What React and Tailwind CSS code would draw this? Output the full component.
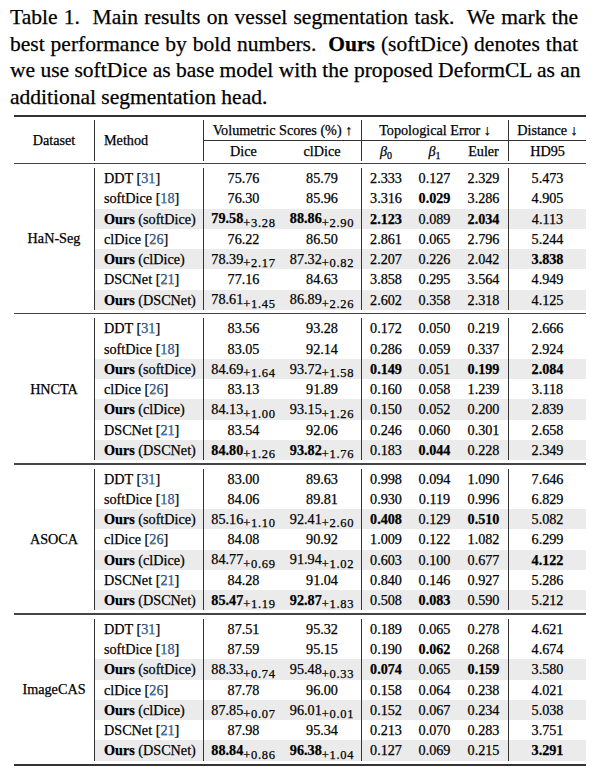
import React from "react";

const sections = [
  {
    name: "HaN-Seg",
    rows: [
      ["DDT", "31", ["75.76", "85.79", "2.333", "0.127", "2.329", "5.473"]],
      ["softDice", "18", ["76.30", "85.96", "3.316", "*0.029", "3.286", "4.905"]],
      ["(softDice)", null, ["*79.58|+3.28", "*88.86|+2.90", "*2.123", "0.089", "*2.034", "4.113"]],
      ["clDice", "26", ["76.22", "86.50", "2.861", "0.065", "2.796", "5.244"]],
      ["(clDice)", null, ["78.39|+2.17", "87.32|+0.82", "2.207", "0.226", "2.042", "*3.838"]],
      ["DSCNet", "21", ["77.16", "84.63", "3.858", "0.295", "3.564", "4.949"]],
      ["(DSCNet)", null, ["78.61|+1.45", "86.89|+2.26", "2.602", "0.358", "2.318", "4.125"]],
    ],
  },
  {
    name: "HNCTA",
    rows: [
      ["DDT", "31", ["83.56", "93.28", "0.172", "0.050", "0.219", "2.666"]],
      ["softDice", "18", ["83.05", "92.14", "0.286", "0.059", "0.337", "2.924"]],
      ["(softDice)", null, ["84.69|+1.64", "93.72|+1.58", "*0.149", "0.051", "*0.199", "*2.084"]],
      ["clDice", "26", ["83.13", "91.89", "0.160", "0.058", "1.239", "3.118"]],
      ["(clDice)", null, ["84.13|+1.00", "93.15|+1.26", "0.150", "0.052", "0.200", "2.839"]],
      ["DSCNet", "21", ["83.54", "92.06", "0.246", "0.060", "0.301", "2.658"]],
      ["(DSCNet)", null, ["*84.80|+1.26", "*93.82|+1.76", "0.183", "*0.044", "0.228", "2.349"]],
    ],
  },
  {
    name: "ASOCA",
    rows: [
      ["DDT", "31", ["83.00", "89.63", "0.998", "0.094", "1.090", "7.646"]],
      ["softDice", "18", ["84.06", "89.81", "0.930", "0.119", "0.996", "6.829"]],
      ["(softDice)", null, ["85.16|+1.10", "92.41|+2.60", "*0.408", "0.129", "*0.510", "5.082"]],
      ["clDice", "26", ["84.08", "90.92", "1.009", "0.122", "1.082", "6.299"]],
      ["(clDice)", null, ["84.77|+0.69", "91.94|+1.02", "0.603", "0.100", "0.677", "*4.122"]],
      ["DSCNet", "21", ["84.28", "91.04", "0.840", "0.146", "0.927", "5.286"]],
      ["(DSCNet)", null, ["*85.47|+1.19", "*92.87|+1.83", "0.508", "*0.083", "0.590", "5.212"]],
    ],
  },
  {
    name: "ImageCAS",
    rows: [
      ["DDT", "31", ["87.51", "95.32", "0.189", "0.065", "0.278", "4.621"]],
      ["softDice", "18", ["87.59", "95.15", "0.190", "*0.062", "0.268", "4.674"]],
      ["(softDice)", null, ["88.33|+0.74", "95.48|+0.33", "*0.074", "0.065", "*0.159", "3.580"]],
      ["clDice", "26", ["87.78", "96.00", "0.158", "0.064", "0.238", "4.021"]],
      ["(clDice)", null, ["87.85|+0.07", "96.01|+0.01", "0.152", "0.067", "0.234", "5.038"]],
      ["DSCNet", "21", ["87.98", "95.34", "0.213", "0.070", "0.283", "3.751"]],
      ["(DSCNet)", null, ["*88.84|+0.86", "*96.38|+1.04", "0.127", "0.069", "0.215", "*3.291"]],
    ],
  },
];

const borderCols = [0, 1, 3, 6];

function Value({ v }) {
  const bold = v.startsWith("*");
  const s = bold ? v.slice(1) : v;
  const [main, sub] = s.split("|");
  return (
    <span className="whitespace-nowrap">
      <span className={bold ? "font-bold" : ""}>{main}</span>
      {sub && (
        <span className="relative top-[3.5px] text-[12.5px] leading-none tracking-[0.7px]">{sub}</span>
      )}
    </span>
  );
}

function Row({ method, cite, vals }) {
  const ours = cite === null;
  return (
    <div
      className={
        "grid grid-cols-[109px_80px_78px_49px_49px_49px_78px] h-[20.25px] " +
        (ours ? "bg-[#ebebeb]" : "")
      }
    >
      <div className="flex items-center pl-[9px] border-l border-[#333] whitespace-nowrap">
        {ours ? (
          <span>
            <span className="font-bold">Ours</span> {method}
          </span>
        ) : (
          <span>
            {method} [<span className="text-[#3a7bc8]">{cite}</span>]
          </span>
        )}
      </div>
      {vals.map((v, i) => (
        <div
          key={i}
          className={
            "flex items-center justify-center " +
            (borderCols.includes(i + 1) ? "border-l border-[#333]" : "")
          }
        >
          <Value v={v} />
        </div>
      ))}
    </div>
  );
}

function Section({ sec }) {
  return (
    <div className="flex">
      <div className="w-[80px] flex items-center justify-center">{sec.name}</div>
      <div className="flex flex-col pt-[4px] pb-[3px]">
        {sec.rows.map((r, i) => (
          <Row key={i} method={r[0]} cite={r[1]} vals={r[2]} />
        ))}
      </div>
    </div>
  );
}

const lineCls = "whitespace-nowrap text-justify [text-align-last:justify]";

export default function App() {
  return (
    <div className="w-[600px] h-[778px] bg-white text-black font-['Liberation_Serif',serif] overflow-hidden [-webkit-text-stroke:0.25px_#000]">
      <div className="pl-[10px] w-[578px] pt-[4px] text-[21.5px] leading-[26.5px]">
        <div className={lineCls}>Table 1.&nbsp; Main results on vessel segmentation task.&nbsp; We mark the</div>
        <div className={lineCls}>
          best performance by bold numbers.&nbsp; <span className="font-bold">Ours</span> (softDice) denotes that
        </div>
        <div className={lineCls}>we use softDice as base model with the proposed DeformCL as an</div>
        <div>additional segmentation head.</div>
      </div>

      <div className="ml-[14px] mt-[5px] w-[572px] text-[14.2px] leading-none">
        <div className="h-[2px] bg-[#333]" />
        <div className="pt-[3px] pb-[1.5px]">
          <div className="grid grid-cols-[80px_109px_80px_78px_49px_49px_49px_78px] grid-rows-[21px_20px]">
            <div className="row-span-2 flex items-center justify-center">Dataset</div>
            <div className="row-span-2 flex items-center pl-[9px] border-l border-[#333]">Method</div>
            <div className="col-span-2 flex items-center justify-center border-l border-b border-[#333] whitespace-nowrap">
              Volumetric Scores (%) ↑
            </div>
            <div className="col-span-3 flex items-center justify-center border-l border-b border-[#333] whitespace-nowrap">
              Topological Error ↓
            </div>
            <div className="flex items-center justify-center border-l border-b border-[#333] whitespace-nowrap">
              Distance ↓
            </div>
            <div className="flex items-center justify-center border-l border-[#333]">Dice</div>
            <div className="flex items-center justify-center">clDice</div>
            <div className="flex items-center justify-center border-l border-[#333]">
              <span>
                <i>β</i>
                <span className="relative top-[3px] text-[10px]">0</span>
              </span>
            </div>
            <div className="flex items-center justify-center">
              <span>
                <i>β</i>
                <span className="relative top-[3px] text-[10px]">1</span>
              </span>
            </div>
            <div className="flex items-center justify-center">Euler</div>
            <div className="flex items-center justify-center border-l border-[#333]">HD95</div>
          </div>
        </div>
        {sections.map((sec) => (
          <React.Fragment key={sec.name}>
            <div className="h-[1.5px] bg-[#444]" />
            <Section sec={sec} />
          </React.Fragment>
        ))}
        <div className="h-[2px] bg-[#333]" />
      </div>
    </div>
  );
}
